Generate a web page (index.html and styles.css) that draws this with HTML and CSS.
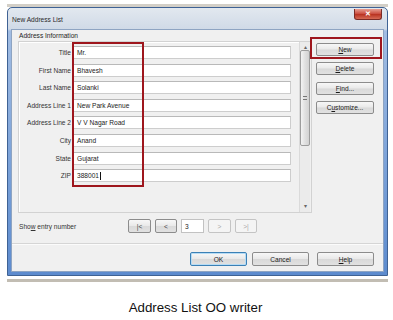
FILE: index.html
```html
<!DOCTYPE html>
<html>
<head>
<meta charset="utf-8">
<link rel="stylesheet" href="styles.css">
</head>
<body>
<div class="screen">
  <div class="window">
    <div class="titlebar">
      <span class="title">New Address List</span>
      <span class="close">&#x2715;</span>
    </div>
    <div class="client">
      <div class="main">
        <div class="left">
          <div class="group-label">Address Information</div>
          <div class="group">
            <div class="fields">
              <div class="row"><span class="lbl">Title</span><span class="input">Mr.</span></div>
              <div class="row"><span class="lbl">First Name</span><span class="input">Bhavesh</span></div>
              <div class="row"><span class="lbl">Last Name</span><span class="input">Solanki</span></div>
              <div class="row"><span class="lbl">Address Line 1</span><span class="input">New Park Avenue</span></div>
              <div class="row"><span class="lbl">Address Line 2</span><span class="input">V V Nagar Road</span></div>
              <div class="row"><span class="lbl">City</span><span class="input">Anand</span></div>
              <div class="row"><span class="lbl">State</span><span class="input">Gujarat</span></div>
              <div class="row"><span class="lbl">ZIP</span><span class="input">388001<span class="caret"></span></span></div>
            </div>
            <div class="scrollbar">
              <span class="arrow">&#x25B4;</span>
              <div class="thumb"><span class="grip"></span></div>
              <div class="track"></div>
              <span class="arrow">&#x25BE;</span>
            </div>
          </div>
        </div>
        <div class="side">
          <span class="btn"><u>N</u>ew</span>
          <span class="btn"><u>D</u>elete</span>
          <span class="btn"><u>F</u>ind...</span>
          <span class="btn">C<u>u</u>stomize...</span>
        </div>
      </div>
      <div class="nav">
        <span class="nav-text">Sho<u>w</u> entry number</span>
        <span class="btn nb w23">|&lt;</span>
        <span class="btn nb w22">&lt;</span>
        <span class="numbox">3</span>
        <span class="btn nb w23 off">&gt;</span>
        <span class="btn nb w22 off">&gt;|</span>
      </div>
      <div class="separator"></div>
      <div class="footer">
        <span class="btn fb ok">OK</span>
        <span class="btn fb">Cancel</span>
        <span class="btn fb help"><u>H</u>elp</span>
      </div>
    </div>
  </div>
  <div class="mark mark-fields"></div>
  <div class="mark mark-new"></div>
</div>
<div class="strip"></div>
<p class="caption">Address List OO writer</p>
</body>
</html>
```
FILE: styles.css
```css
* { box-sizing: border-box; }
body {
  margin: 0;
  background: #fff;
  font-family: "Liberation Sans", Arial, sans-serif;
  color: #1e1e1e;
}
.screen {
  position: relative;
  margin: 4px 0 0 7px;
  width: 381px;
  border-top: 3px solid #d3cfc7;
}
.window {
  height: 269px;
  border: 1px solid #3f6294;
  border-radius: 5px 5px 0 0;
  background: linear-gradient(to bottom, #e2e8ef 0, #d0dae7 21px, #a2bde3 23px, #7aa1d8 60%, #5d8bce 100%);
  padding: 0 4px 4px;
  display: flex;
  flex-direction: column;
}
.titlebar {
  height: 22px;
  display: flex;
  align-items: center;
  padding-top: 1px;
}
.title {
  font-size: 6.6px;
  color: #2a2a2a;
  flex: 1;
}
.close {
  align-self: flex-start;
  margin-top: 0;
  margin-right: 1px;
  width: 28px;
  height: 11px;
  border: 1px solid #7a2b26;
  border-top: none;
  border-radius: 0 0 3px 3px;
  background: linear-gradient(to bottom, #e8a093, #c9493b 50%, #b7301f 51%, #d66a55);
  color: #fff;
  font-size: 7px;
  font-weight: bold;
  display: flex;
  align-items: center;
  justify-content: center;
}
.client {
  flex: 1;
  background: #f0f0f0;
  box-shadow: 0 0 0 1px #8ea4c2;
  display: flex;
  flex-direction: column;
}
.main {
  display: flex;
  padding-left: 6px;
}
.left {
  width: 294px;
}
.group-label {
  height: 9px;
  line-height: 9px;
  padding-left: 1px;
  margin-top: 1px;
  font-size: 6.6px;
}
.group {
  margin-top: 1px;
  height: 172px;
  border: 1px solid #d2d2d2;
  box-shadow: inset 1px 1px 0 #fff;
  display: flex;
}
.fields {
  padding-top: 4px;
  display: flex;
  flex-direction: column;
  gap: 4.6px;
}
.row {
  display: flex;
  align-items: center;
  gap: 2px;
  height: 13px;
}
.lbl {
  width: 52px;
  text-align: right;
  font-size: 6.6px;
  color: #333;
  white-space: nowrap;
}
.input {
  width: 218px;
  height: 13px;
  border: 1px solid #cdcdcd;
  border-top-color: #b9b9b9;
  background: #fff;
  font-size: 6.6px;
  line-height: 11px;
  padding-left: 3px;
  color: #222;
  display: flex;
  align-items: center;
}
.caret {
  display: inline-block;
  width: 1px;
  height: 8px;
  background: #111;
  margin-left: 1px;
}
.scrollbar {
  margin-left: 8px;
  width: 11px;
  display: flex;
  flex-direction: column;
  align-items: center;
  background: #ebebeb;
  border-left: 1px solid #dadada;
}
.arrow {
  height: 11px;
  font-size: 6px;
  color: #666;
  line-height: 11px;
}
.thumb {
  width: 10px;
  height: 96px;
  margin-top: -3px;
  border: 1px solid #9c9c9c;
  border-radius: 2px;
  background: linear-gradient(to right, #f3f3f3, #e0e0e0 50%, #d2d2d2);
  display: flex;
  align-items: center;
  justify-content: center;
}
.grip {
  width: 4px;
  height: 4px;
  border-top: 1px solid #777;
  border-bottom: 1px solid #777;
}
.track { flex: 1; }
.side {
  margin-left: 4px;
  padding-top: 13px;
  display: flex;
  flex-direction: column;
  gap: 6.3px;
}
.btn {
  width: 58px;
  height: 13px;
  border: 1px solid #8c8c8c;
  border-radius: 2px;
  background: linear-gradient(to bottom, #f7f7f7, #e9e9e9 48%, #d9d9d9 52%, #e1e1e1);
  font-size: 6.6px;
  color: #1a1a1a;
  display: flex;
  align-items: center;
  justify-content: center;
}
.btn u { text-decoration-thickness: 0.5px; }
.nav {
  margin-top: 6px;
  padding-left: 7px;
  height: 14px;
  display: flex;
  align-items: center;
  gap: 4px;
}
.nav-text {
  width: 105px;
  font-size: 6.6px;
  color: #333;
}
.nb { height: 14px; color: #444; }
.w23 { width: 23px; }
.w22 { width: 22px; }
.nb.off {
  color: #a8a8a8;
  border-color: #c4c4c4;
  background: #f4f4f4;
}
.numbox {
  width: 23px;
  height: 14px;
  border: 1px solid #c2c2c2;
  background: #fff;
  font-size: 6.6px;
  padding-left: 3px;
  display: flex;
  align-items: center;
}
.separator {
  margin-top: 10px;
  height: 2px;
  border-top: 1px solid #d5d5d5;
  border-bottom: 1px solid #fbfbfb;
}
.footer {
  margin-top: 7px;
  padding-right: 9px;
  display: flex;
  justify-content: flex-end;
  gap: 5px;
}
.fb { width: 57px; height: 14px; }
.help { margin-left: 3px; }
.ok {
  border-color: #3b80b5;
  box-shadow: inset 0 0 0 1px #b6dcf5;
}
.mark {
  position: absolute;
  border: 2px solid #9e161d;
}
.mark-fields {
  left: 65px;
  top: 35px;
  width: 72px;
  height: 145px;
}
.mark-new {
  left: 303px;
  top: 30px;
  width: 72px;
  height: 22px;
}
.strip {
  margin: 3px 0 0 7px;
  width: 381px;
  height: 3px;
  background: #c2bdb3;
}
.caption {
  margin: 18px 0 0;
  padding-right: 2px;
  text-align: center;
  font-size: 13.3px;
  line-height: 16px;
  color: #111;
}
```
